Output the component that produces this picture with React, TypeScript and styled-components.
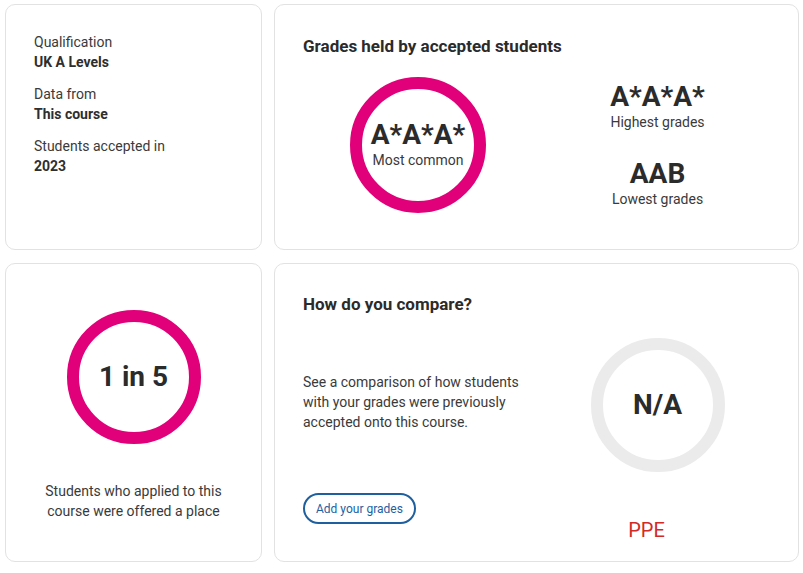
import React from "react";
import styled, { createGlobalStyle } from "styled-components";

const GlobalStyle = createGlobalStyle`
  body {
    margin: 0;
    background: #ffffff;
    font-family: Roboto, "Liberation Sans", Arial, sans-serif;
    color: #333333;
  }
  * { box-sizing: border-box; }
`;

const Page = styled.div`
  display: grid;
  grid-template-columns: 257px 525px;
  grid-template-rows: 246px 299px;
  column-gap: 12px;
  row-gap: 13px;
  padding: 4px 5px;
`;

const Card = styled.section<{ $top?: number }>`
  background: #ffffff;
  border: 1px solid #e2e2e2;
  border-radius: 10px;
  padding: ${(p) => p.$top ?? 29}px 28px 28px;
  display: flex;
  flex-direction: column;
`;

const InfoList = styled.dl`
  margin: 0;
  display: flex;
  flex-direction: column;
  gap: 12px;
`;

const Field = styled.div`
  display: flex;
  flex-direction: column;
`;

const Label = styled.dt`
  font-size: 14px;
  line-height: 20px;
  color: #3a3a3a;
`;

const Value = styled.dd`
  margin: 0;
  font-size: 14px;
  line-height: 20px;
  font-weight: 700;
  color: #2e2e2e;
`;

const Title = styled.h2`
  margin: 0;
  font-size: 17px;
  line-height: 22px;
  font-weight: 700;
  color: #2b2b2b;
`;

const Halves = styled.div<{ $top: number }>`
  display: grid;
  grid-template-columns: 230px 1fr;
  margin-top: ${(p) => p.$top}px;
`;

const Ring = styled.div<{ $color: string; $size: number }>`
  width: ${(p) => p.$size}px;
  height: ${(p) => p.$size}px;
  border-radius: 50%;
  border: 12px solid ${(p) => p.$color};
  display: flex;
  flex-direction: column;
  align-items: center;
  justify-content: center;
  flex-shrink: 0;
`;

const Big = styled.div`
  font-size: 28px;
  line-height: 30px;
  font-weight: 700;
  color: #2b2b2b;
`;

const Small = styled.div`
  font-size: 14px;
  line-height: 20px;
  color: #3a3a3a;
  text-align: center;
`;

const Column = styled.div<{ $shift?: number; $justify?: string }>`
  display: flex;
  flex-direction: column;
  align-items: center;
  justify-content: ${(p) => p.$justify ?? "center"};
  padding-left: ${(p) => p.$shift ?? 0}px;
`;

const Stat = styled.div`
  display: flex;
  flex-direction: column;
  align-items: center;
  & + & {
    margin-top: 27px;
  }
`;

const OfferCard = styled(Card)`
  align-items: center;
`;

const OfferText = styled(Small)`
  margin-top: 37px;
`;

const CompareLeft = styled.div`
  display: flex;
  flex-direction: column;
  align-items: flex-start;
  padding-top: 34px;
`;

const Paragraph = styled.p`
  margin: 0;
  max-width: 232px;
  font-size: 14px;
  line-height: 20px;
  color: #3a3a3a;
`;

const OutlineButton = styled.button`
  margin-top: 61px;
  height: 31px;
  padding: 0 11px;
  border: 2px solid #1e5f9f;
  border-radius: 16px;
  background: #ffffff;
  color: #1e5f9f;
  font-family: Roboto, "Liberation Sans", Arial, sans-serif;
  font-size: 12px;
  cursor: pointer;
`;

const Course = styled.div`
  margin-top: 46px;
  margin-right: 22px;
  font-size: 20px;
  line-height: 24px;
  color: #d22b25;
`;

const MAGENTA = "#e2007a";

export default function App() {
  return (
    <>
      <GlobalStyle />
      <Page>
        <Card $top={27}>
          <InfoList>
            <Field>
              <Label>Qualification</Label>
              <Value>UK A Levels</Value>
            </Field>
            <Field>
              <Label>Data from</Label>
              <Value>This course</Value>
            </Field>
            <Field>
              <Label>Students accepted in</Label>
              <Value>2023</Value>
            </Field>
          </InfoList>
        </Card>

        <Card $top={30}>
          <Title>Grades held by accepted students</Title>
          <Halves $top={20}>
            <Column>
              <Ring $color={MAGENTA} $size={136}>
                <Big>A*A*A*</Big>
                <Small>Most common</Small>
              </Ring>
            </Column>
            <Column $shift={12}>
              <Stat>
                <Big>A*A*A*</Big>
                <Small>Highest grades</Small>
              </Stat>
              <Stat>
                <Big>AAB</Big>
                <Small>Lowest grades</Small>
              </Stat>
            </Column>
          </Halves>
        </Card>

        <OfferCard $top={46}>
          <Ring $color={MAGENTA} $size={134}>
            <Big>1 in 5</Big>
          </Ring>
          <OfferText>
            Students who applied to this
            <br />
            course were offered a place
          </OfferText>
        </OfferCard>

        <Card>
          <Title>How do you compare?</Title>
          <Halves $top={23}>
            <CompareLeft>
              <Paragraph>
                See a comparison of how students with your grades were
                previously accepted onto this course.
              </Paragraph>
              <OutlineButton>Add your grades</OutlineButton>
            </CompareLeft>
            <Column $shift={12} $justify="flex-start">
              <Ring $color="#ebebeb" $size={134}>
                <Big>N/A</Big>
              </Ring>
              <Course>PPE</Course>
            </Column>
          </Halves>
        </Card>
      </Page>
    </>
  );
}
